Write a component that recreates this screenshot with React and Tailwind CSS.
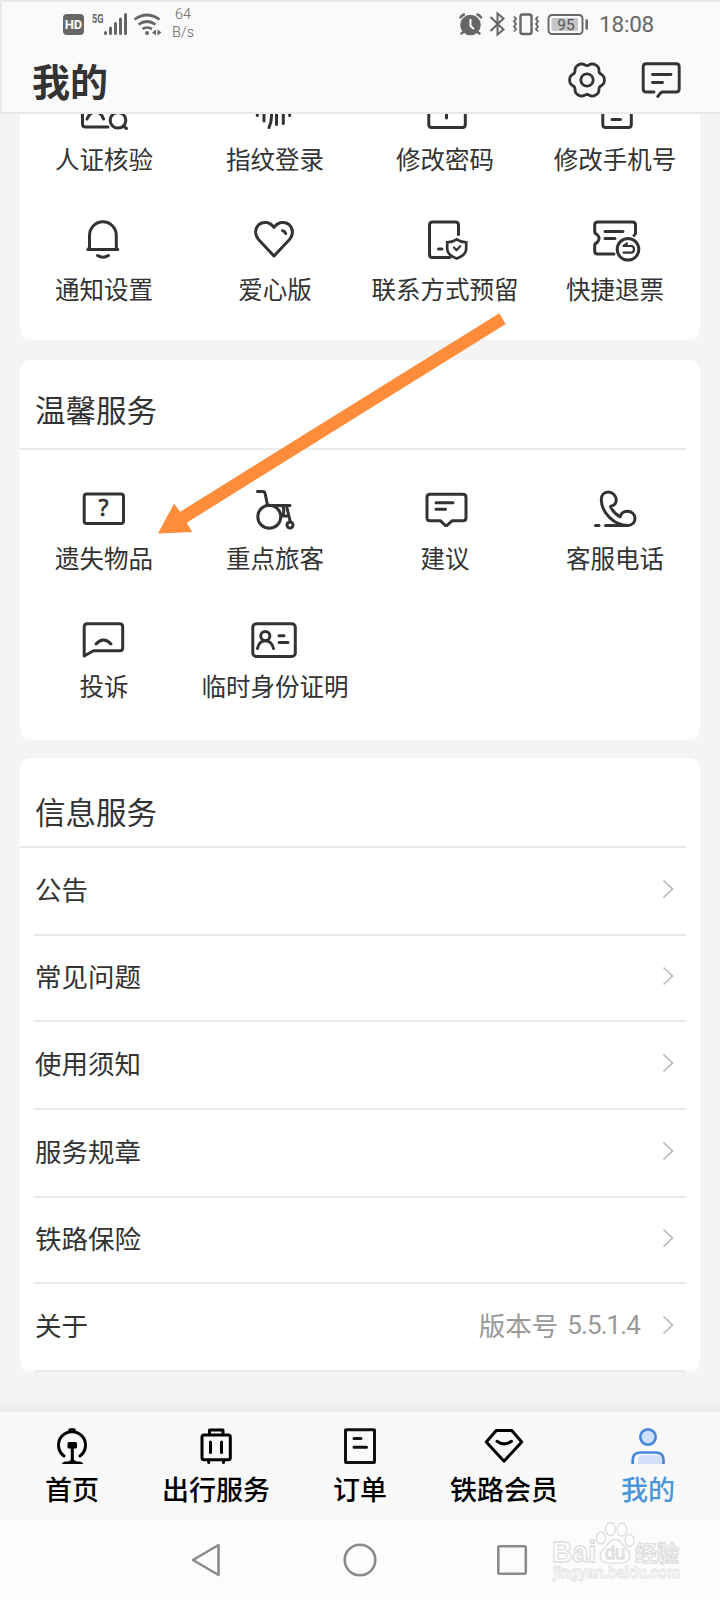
import React from "react";

const INK = "#333333";

function Icon({ children, color = INK, width = 3 }) {
  return (
    <svg
      className="size-12 shrink-0 overflow-visible"
      viewBox="0 0 48 48"
      fill="none"
      stroke={color}
      strokeWidth={width}
      strokeLinecap="round"
      strokeLinejoin="round"
    >
      {children}
    </svg>
  );
}

const icons = {
  verify: (
    <Icon>
      <path d="M2.500 10v26q0 3 3 3H28" />
      <path d="M7 31q3-7 8.500-7t8 7" />
      <circle cx="38" cy="32.300" r="7.800" />
      <path d="m43.500 38 3 2.500" />
    </Icon>
  ),
  finger: (
    <Icon>
      <path d="M6.300 22v5.500M13 20v13M20.500 20v8q0 6.500-2.500 11.500M25.500 20v16.500M32.300 20v15.500M38.700 22v5.500" />
    </Icon>
  ),
  password: (
    <Icon>
      <path d="M7.800 18v18.500q0 3 3 3h30.500q3 0 3-3V18M25.500 24v6" />
    </Icon>
  ),
  phone: (
    <Icon>
      <path d="M11.800 4v32.500q0 3 3 3h22.500q3 0 3-3V4M21 31.500h8.500" />
    </Icon>
  ),
  bell: (
    <Icon>
      <path d="M9.500 32V20.500a13.400 13.700 0 0 1 26.800 0V32q0 1.500 1.500 2.500h-30q1.700-1 1.700-2.500ZM17.500 40.500q5.500 3.500 11 0" />
    </Icon>
  ),
  heart: (
    <Icon>
      <path d="M23 12.500C19 6.500 12 6.200 8 9.500 3.500 13.500 3.500 20 7.500 24.500L23 41l15.500-16.500C42.500 20 42.500 13.500 38 9.500 34 6.200 27 6.500 23 12.500ZM31.500 15.700q2.500.5 3.200 2.800" />
    </Icon>
  ),
  contact: (
    <Icon>
      <path d="M37.500 19.500V10q0-3-3-3H11.500q-3 0-3 3v29.500q0 3 3 3h17.500M17.500 34h3.500" />
      <path strokeLinejoin="miter" strokeWidth="2.700" d="M35.700 24.300q4.300 3 9.500 3v6.200q0 6.500-9.500 10-9.500-3.500-9.500-10v-6.200q5.200 0 9.500-3Z" />
      <path strokeWidth="2.200" d="m33 32.500 2.500 2.700 3.700-4" />
    </Icon>
  ),
  refund: (
    <Icon>
      <path d="M43 20.500q1.500-.8 1.500-2.500v-8q0-3-3-3H6.700q-3 0-3 3v6.500q0 2.300 2.400 3 4 3.700 0 8-2.400 1-2.400 3V36q0 3 3 3H23M14 16.500h18M14 23.500h10" />
      <circle cx="37" cy="34.300" r="10.800" />
      <path strokeWidth="2.200" d="M36 28.500 32.500 31h7.500q3 0 3 3.300t-3 3.300h-7.500" />
    </Icon>
  ),
  lost: (
    <Icon>
      <rect x="4.200" y="10" width="39.300" height="29.500" rx="2.500" />
      <text
        x="23.500"
        y="32"
        textAnchor="middle"
        fill={INK}
        stroke={INK}
        strokeWidth=".7"
        className="font-['Noto_Sans',sans-serif] text-[23px]"
      >
        ?
      </text>
    </Icon>
  ),
  wheelchair: (
    <Icon>
      <path d="M6.500 7.500h5.200q2 0 2.400 2L16.500 21M15.500 21.500H39M31.500 32h6M35.500 22l3.500 14.500M32 22.500q1.500 4 0 9" />
      <circle cx="18.300" cy="32.700" r="11.500" />
      <circle cx="39" cy="41" r="3" />
    </Icon>
  ),
  advice: (
    <Icon>
      <path d="M9 10.300h33q3 0 3 3v20.500q0 3-3 3H31L26.500 41q-1.300 1-2.600 0l-4.400-4.200H9q-3 0-3-3V13.300q0-3 3-3ZM15 18.800h17M15 25.300h9.500" />
    </Icon>
  ),
  call: (
    <Icon>
      <path d="M4.500 41.500h3.500M14.500 41.500H37C23 41.500 10.300 28.500 10.300 15.500 10.300 11 13.200 8 17.200 8 21.800 8 25.200 11.800 25.200 16c0 3.200-2.200 5.700-5.700 6.500 2 4.500 5.500 8.300 9.700 10.300.8-3.600 3.800-5.600 7.300-5.600 4 0 7.500 3 7.500 7.200S40.500 41.500 37 41.500" />
    </Icon>
  ),
  complain: (
    <Icon>
      <path d="M7.200 7.800h32.500q3 0 3 3v20.900q0 3-3 3H13.500L4.200 40V10.800q0-3 3-3ZM16 28q7.500-8 15 0" />
    </Icon>
  ),
  idcard: (
    <Icon>
      <rect x="1.800" y="7.800" width="42.500" height="32.700" rx="3.500" />
      <circle cx="14.300" cy="20" r="4.600" />
      <path d="M6.500 32.500c1.500-10.500 14-10.500 16 0M28 19.800h5M28 26.500h9" />
    </Icon>
  ),
  home: (
    <Icon color="#000">
      <path d="M16 34a13.500 13.500 0 1 1 16 0" />
      <path d="M22 8h4" strokeWidth="3.500" />
      <path d="M21 21.500h6.500v3.500H21Z" fill="#000" />
      <path d="M24.300 26v13" />
      <path d="M14 42q0-2 4-2.500 4 0 5-2h3q1 2 5 2 4 .5 4 2.500Z" fill="#000" stroke="none" />
    </Icon>
  ),
  luggage: (
    <Icon color="#000">
      <rect x="10" y="13" width="28.300" height="24.700" rx="2" />
      <path d="M17.500 12V8h13.500v4M18.500 20v10.500M29.500 20v10.500M16.700 39v1.500M31.500 39v1.500" />
    </Icon>
  ),
  order: (
    <Icon color="#111">
      <rect x="9.500" y="7.700" width="29" height="32.800" rx=".5" />
      <path d="M18 16.500h7M18 25.300h12.500" />
    </Icon>
  ),
  diamond: (
    <Icon color="#000">
      <path d="M16.300 8.500h15.400L41.700 20 24 39.200 6.300 20ZM17 19.300q7 5.200 14.500 0" />
    </Icon>
  ),
  me: (
    <Icon color="#4c86d8" width={2.7}>
      <circle cx="24" cy="15" r="7.700" fill="#cfdefa" />
      <path d="M14 42V38q0-5 6-5h12q6 0 6 5v4Z" fill="#d3e0fb" stroke="none" />
      <path strokeLinecap="butt" d="M8.700 42v-4q0-7.500 8-7.500h14.800q8 0 8 7.500v4" />
    </Icon>
  ),
};

function IconGrid({ items, className }) {
  return (
    <div className="grid grid-cols-4">
      {items.map(([icon, label]) => (
        <div key={label} className={`flex flex-col items-center first:-ml-0.5 ${className}`}>
          {icons[icon]}
          <span className="whitespace-nowrap text-[24.500px] leading-6">{label}</span>
        </div>
      ))}
    </div>
  );
}

const gearPoints = Array.from({ length: 72 }, (_, i) => {
  const a = (i * Math.PI) / 36;
  const r = 16.2 + 1.5 * Math.cos(6 * a) - 0.35 * Math.cos(12 * a);
  return `${(20 + r * Math.cos(a)).toFixed(2)},${(20 + r * Math.sin(a)).toFixed(2)}`;
}).join(" ");

function StatusBar() {
  return (
    <div className="flex h-[44px] items-center pl-[61px] font-[Roboto,sans-serif] text-[#666]">
      <span className="flex h-[21px] w-[21px] items-center justify-center rounded bg-[#666] text-[13px] font-bold leading-none text-[#fafafa]">
        HD
      </span>
      <svg className="ml-1.5 h-7 w-[72px]" viewBox="90 10 72 28" fill="none" stroke="#666">
        <text x="92" y="22.500" fill="#666" stroke="none" textLength="11.500" lengthAdjust="spacingAndGlyphs" className="text-[13px] font-bold">
          5G
        </text>
        <path strokeWidth="3" strokeLinecap="round" d="M105.500 32.500v1M110.500 28v5.500M115.500 23.500v10M120.500 19v14.500M125.500 14.500v19" />
        <path strokeWidth="2.700" d="M134.500 19.500q12.500-9 25 0M138.500 24.500q8.500-6 17 0M142.500 29q4.500-3 9.500 0" />
        <circle cx="147" cy="33" r="2" fill="#666" stroke="none" />
        <path fill="#666" stroke="none" d="m152 32.500 4-3v6ZM161.500 32.500l-4-3v6Z" />
      </svg>
      <span className="ml-[7px] flex w-7 flex-col items-center text-[14.500px] font-light leading-[18px]">
        <span>64</span>
        <span>B/s</span>
      </span>
      <svg className="ml-[259px] h-7 w-[134px]" viewBox="457 10 134 28" fill="none" stroke="#666">
        <circle cx="471.500" cy="25" r="10.300" fill="#666" stroke="none" />
        <path strokeWidth="2.500" strokeLinecap="round" d="M461.500 17.500q1-2 3.500-3M478.500 14.500q2.500 1 3.500 3M464.500 32l-2 1.500M478.500 32l2 1.500" />
        <path stroke="#fafafa" strokeWidth="2" d="M471.500 19v7l3.500 3" />
        <path strokeWidth="2" d="m491.500 17 13 12.500-6 5V13.500l6 5-13 12.500" />
        <rect x="521.500" y="14.500" width="11" height="19.500" rx="2" strokeWidth="2.400" />
        <path strokeWidth="1.900" d="m515 16.500 2 2.500-2 2.500 2 2.500-2 2.500 2 2.500-2 2.500M539 16.500l-2 2.500 2 2.500-2 2.500 2 2.500-2 2.500 2 2.500" />
        <rect x="549.500" y="15" width="34" height="19" rx="3.500" strokeWidth="1.900" />
        <rect x="552.500" y="18" width="26.500" height="13" rx="1" fill="#c6c6c6" stroke="none" />
        <path strokeWidth="2.500" strokeLinecap="round" d="M587.700 20.500v8" />
        <text x="567" y="30" fill="#555" stroke="none" textAnchor="middle" className="text-[15.500px]">
          95
        </text>
      </svg>
      <span className="ml-[9px] text-[22.500px] leading-none tracking-[-0.2px]">18:08</span>
    </div>
  );
}

function Header() {
  return (
    <header className="h-[114px] shrink-0 border-2 border-r-0 border-[#e9e9e9] bg-[#fafafa]">
      <StatusBar />
      <div className="flex h-[68px] items-center pl-[30px] pr-[37px]">
        <h1 className="flex-1 text-[38px] font-bold leading-none">我的</h1>
        <svg className="mr-8 size-10" viewBox="0 0 40 40" fill="none" stroke={INK} strokeWidth="2.800" strokeLinejoin="round">
          <polygon points={gearPoints} />
          <circle cx="20" cy="20" r="6.200" />
        </svg>
        <svg className="size-11" viewBox="639 59 44 44" fill="none" stroke={INK} strokeWidth="2.900" strokeLinecap="round">
          <path d="M654 93h-7.800q-3 0-3-3V67.800q0-3 3-3h30q3 0 3 3V90q0 3-3 3h-13.500q-1.500 0-2.500 1.500l-2.500 3M652.500 75.500h18.500M652.500 83.500h10" />
        </svg>
      </div>
    </header>
  );
}

const infoRows = [
  ["公告", "h-[88px]"],
  ["常见问题", "h-[86px]"],
  ["使用须知", "h-[88px]"],
  ["服务规章", "h-[88px]"],
  ["铁路保险", "h-[86px]"],
  ["关于", "h-[88px]", "版本号"],
];

function InfoRow({ label, height, note }) {
  return (
    <li className={`mx-3.5 flex items-center border-b-2 border-[#e8eaeb] pb-1 pl-px pr-3 text-[26.500px] ${height}`}>
      <span className="flex-1 leading-none">{label}</span>
      {note && (
        <span className="mr-[22px] flex items-center leading-none text-[#999]">
          {note}
          <span className="ml-[9px] font-[Roboto,sans-serif] text-[26px] tracking-[-0.9px]">5.5.1.4</span>
        </span>
      )}
      <svg className="h-5 w-3" viewBox="0 0 12 20" fill="none" stroke="#b8b8b8" strokeWidth="1.700">
        <path d="m1.500 1.500 9 8.500-9 8.500" />
      </svg>
    </li>
  );
}

const tabs = [
  ["home", "首页"],
  ["luggage", "出行服务"],
  ["order", "订单"],
  ["diamond", "铁路会员"],
  ["me", "我的"],
];

function TabBar() {
  return (
    <nav className="grid h-[108px] shrink-0 grid-cols-5 bg-[#f9f9f9] pt-2.5">
      {tabs.map(([icon, label]) => (
        <div key={label} className={`flex flex-col items-center gap-[5px] ${icon === "me" ? "text-[#4a97dc]" : "text-black"}`}>
          {icons[icon]}
          <span className="text-[27px] font-medium leading-7">{label}</span>
        </div>
      ))}
    </nav>
  );
}

function SystemNav() {
  return (
    <div className="flex h-20 shrink-0 items-center bg-[#fcfcfc] pl-[186px]">
      <svg className="h-10 w-[346px]" viewBox="186 1540 346 40" fill="none" stroke="#8a8a8a" strokeWidth="2.600" strokeLinejoin="round">
        <path d="M193 1560 218.500 1545v30Z" />
        <circle cx="360" cy="1560" r="15.300" />
        <rect x="498.300" y="1546.300" width="27.500" height="27.500" rx="1.500" />
      </svg>
    </div>
  );
}

function Watermark() {
  return (
    <svg
      className="absolute left-[548px] top-[1518px] h-[70px] w-[140px] font-['Liberation_Sans','Noto_Sans_CJK_SC',sans-serif]"
      viewBox="548 1518 140 70"
      fill="#fff"
      stroke="#dedede"
      strokeWidth="1.300"
    >
      <text x="552" y="1561.500" textLength="44" lengthAdjust="spacingAndGlyphs" className="text-[29px] font-bold">
        Bai
      </text>
      <ellipse cx="601" cy="1538" rx="4.500" ry="6" />
      <ellipse cx="610.500" cy="1529" rx="4.800" ry="6.500" />
      <ellipse cx="622" cy="1529.500" rx="4.800" ry="6.500" />
      <ellipse cx="629.500" cy="1540.500" rx="4.500" ry="6" />
      <path d="M615 1539.500c5.500 0 7 5 10 8 3.500 3.500 6 6.500 4.500 11-1.500 4.500-7 5-14.500 4.500-7.500.5-13 0-14.500-4.500-1.500-4.500 1-7.500 4.500-11 3-3 4.500-8 10-8Z" />
      <text x="615" y="1559" textAnchor="middle" className="text-[18px]">
        du
      </text>
      <text x="635" y="1560.500" textLength="44" className="text-[22px] font-bold">
        经验
      </text>
      <text x="553" y="1578" textLength="127" lengthAdjust="spacingAndGlyphs" stroke="#e4e4e4" strokeWidth="1" className="text-[16px] font-bold">
        jingyan.baidu.com
      </text>
    </svg>
  );
}

export default function App() {
  return (
    <div className="relative flex h-[1600px] w-[720px] flex-col overflow-hidden bg-[#f4f4f4] font-['Noto_Sans_CJK_SC',sans-serif] text-[#333]">
      <Header />
      <main className="flex min-h-0 flex-1 flex-col overflow-hidden px-5">
        <section className="-mt-[26px] flex h-[252px] shrink-0 flex-col gap-11 rounded-b-[10px] bg-white">
          <IconGrid
            className="gap-[11px]"
            items={[["verify", "人证核验"], ["finger", "指纹登录"], ["password", "修改密码"], ["phone", "修改手机号"]]}
          />
          <IconGrid
            className="gap-3.5"
            items={[["bell", "通知设置"], ["heart", "爱心版"], ["contact", "联系方式预留"], ["refund", "快捷退票"]]}
          />
        </section>

        <section className="mt-5 h-[380px] shrink-0 rounded-[10px] bg-white">
          <h2 className="mr-3.5 flex h-[90px] items-center border-b-2 border-[#e8eaeb] pl-[15px] pt-2.5 text-[30.500px] leading-none">
            温馨服务
          </h2>
          <div className="flex flex-col gap-[46px] pt-[34px]">
            <IconGrid
              className="gap-3.5"
              items={[["lost", "遗失物品"], ["wheelchair", "重点旅客"], ["advice", "建议"], ["call", "客服电话"]]}
            />
            <IconGrid className="gap-2.5" items={[["complain", "投诉"], ["idcard", "临时身份证明"]]} />
          </div>
        </section>

        <section className="mt-[18px] h-[614px] shrink-0 overflow-hidden rounded-[10px] bg-white">
          <h2 className="mr-3.5 flex h-[90px] items-center border-b-2 border-[#e8eaeb] pl-[15px] pt-[18px] text-[30.500px] leading-none">
            信息服务
          </h2>
          <ul>
            {infoRows.map(([label, height, note]) => (
              <InfoRow key={label} label={label} height={height} note={note} />
            ))}
          </ul>
        </section>
        <div className="-mx-5 mt-auto h-5 shrink-0 bg-linear-to-b from-[#f4f4f4] via-[#f4f4f4] to-[#e8e8e8]" />
      </main>
      <TabBar />
      <SystemNav />

      <svg className="pointer-events-none absolute left-[150px] top-[305px] h-[240px] w-[365px]" viewBox="150 305 365 240" fill="#ff8c3a">
        <path d="M499.300 313.300 505.700 324 186.700 522.700 192.300 532 158 533.500 174 503.700 180.300 511.700Z" />
      </svg>
      <Watermark />
    </div>
  );
}
